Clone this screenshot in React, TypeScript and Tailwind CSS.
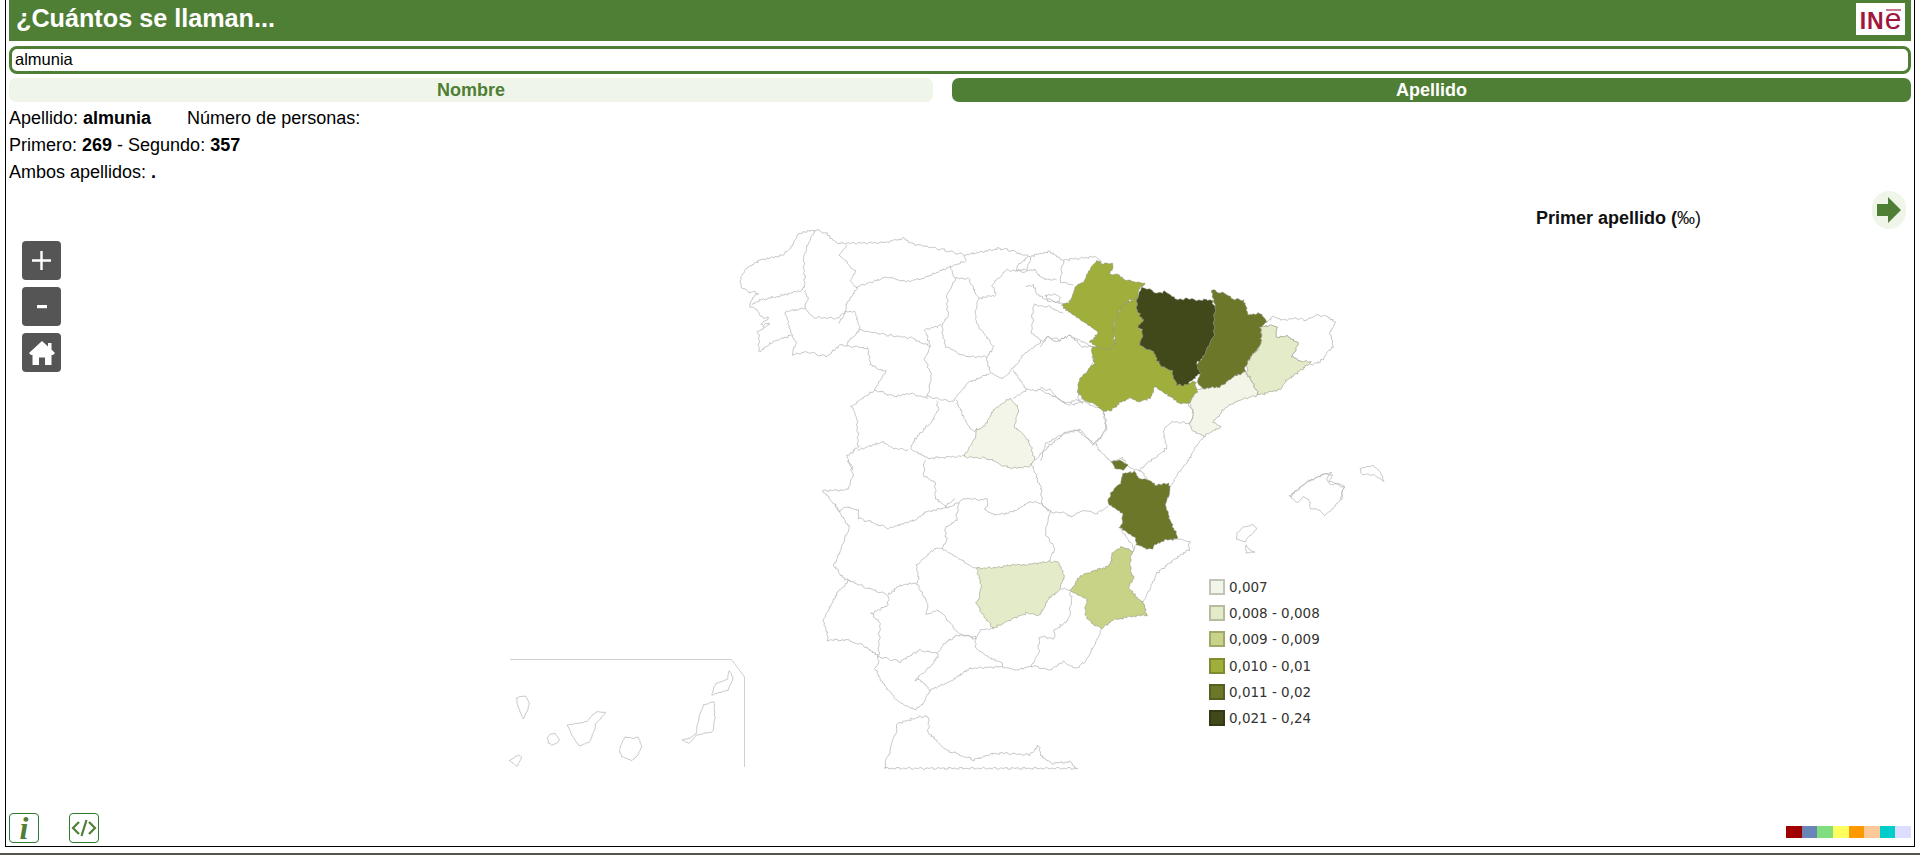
import React from "react";

type P = number[];

// Builds a path from points traced in a zoomed view (origin ox,oy, scale 3); the wobble gives the coast its irregular edge.
function tr(ox: number, oy: number, pts: P, close = false, amp = 0.75): string {
  const xy: [number, number][] = [];
  for (let i = 0; i < pts.length; i += 2) xy.push([ox + pts[i] / 3, oy + pts[i + 1] / 3]);
  if (close) xy.push(xy[0]);
  let d = "";
  for (let i = 0; i < xy.length - 1; i++) {
    const [a, b] = xy[i];
    const [c, e] = xy[i + 1];
    const n = Math.max(1, Math.round(Math.hypot(c - a, e - b) / 1.8));
    for (let k = 0; k < n; k++) {
      const x = a + ((c - a) * k) / n;
      const y = b + ((e - b) * k) / n;
      const dx = Math.sin(x * 1.7 + y * 0.9) * amp + Math.sin(y * 3.1) * amp * 0.6;
      const dy = Math.cos(x * 1.1 - y * 1.6) * amp + Math.sin(x * 2.9) * amp * 0.6;
      d += `${d ? "L" : "M"}${(x + dx).toFixed(1)} ${(y + dy).toFixed(1)}`;
    }
  }
  const [lx, ly] = xy[xy.length - 1];
  d += `L${lx.toFixed(1)} ${ly.toFixed(1)}`;
  return close ? d + "Z" : d;
}

const north: P[] = [
  [60,205,75,178,120,150,190,135,210,115,235,70,285,60,320,70,350,100,490,98,550,85,570,100,650,115,735,135,840,115,885,125,925,140,985,125,1030,150,1125,140,1145,155],
  [60,205,65,235,90,245,115,250,95,265,90,290,110,300,125,320,145,325,120,345,150,340,115,365,118,425,160,395,215,375],
  [285,60,250,140,255,230,245,240,180,258,120,270,95,285],
  [380,105,360,135,405,185,390,210,410,235,380,285,375,305,355,340],
  [255,240,262,265,255,295,280,322,355,325,375,305,405,305,420,360],
  [255,295,195,305,215,375,230,400,215,435,260,425,320,440,360,405,385,408],
  [410,230,460,215,500,200,555,215,610,205,690,170,705,205],
  [705,205,680,260,685,320,665,345,675,410,740,440,800,440,820,410,800,380,775,350,765,320,775,265,745,205,705,205],
  [735,135,735,155,690,170],
  [775,265,830,255,815,225,860,180,915,185,935,140],
  [420,360,500,375,580,385,630,410],
  [385,408,445,415,450,465,498,485,465,540,525,560,570,550,625,565],
  [420,360,385,395,385,408],
  [615,360,665,345],
  [615,360,630,405,615,450,635,495,622,560,700,575,740,520,810,490],
  [800,440,810,490,850,505,875,480,915,430,965,395,935,370,940,285,985,290,1010,300,1030,310],
  [965,395,985,380,1010,395,1050,375,1085,395,1120,415,1115,470,1095,490,1100,515,1075,525,1075,570,1090,575,1050,585,1000,560,965,540,920,540,880,480],
  [920,540,880,565],
  [650,570,655,600,640,630,600,670,570,715,620,745,735,738],
  [708,570,740,640,760,665,790,650],
  [465,540,420,570,395,590,410,620,415,710,380,740,400,780],
  [415,720,490,695,520,715,565,720],
  [1090,575,1150,600,1160,660,1120,705,1075,660,1035,670,990,705,945,750],
  [1030,150,1020,215,1060,225],
  [925,140,895,165,890,180,945,180,965,205,1010,210],
  [915,230,940,225,950,250,975,265,1020,280,1045,285],
  [975,255,1015,255,1020,275,985,275,975,255],
];

const east: P[] = [
  [190,515,200,545,190,580,165,610,185,640,215,665,245,655,268,680,300,695],
  [445,490,460,520,450,550,395,545,370,570,380,625,350,650,320,670,300,690,325,720],
  [490,590,450,650,410,710,390,740],
  [750,770,800,725,860,700,875,705,870,725,910,740,905,780],
  [0,320,20,290,60,300,90,285,125,320,160,320],
  [0,445,30,450,70,490,125,478],
  [0,660,20,610,80,575,120,570,160,610],
];

const south: P[] = [
  [68,92,140,90,160,45,145,0],
  [68,92,105,135,120,155,135,140,175,150,175,175,210,185,265,205,345,180,380,155,430,145,465,115],
  [375,0,370,50,405,65,405,110,440,145,470,130,495,115,545,120,565,115,555,150,590,165,640,155,690,125,725,130,745,155],
  [475,125,470,180,435,205,440,240,425,265,480,300,530,325],
  [425,265,405,265,350,315,355,365,345,370,300,375,265,405],
  [690,0,725,90,725,130,750,155,800,160,815,170,850,150,890,160,925,140],
  [750,155,735,220,765,265,745,305],
  [960,205,1000,260,1000,275],
  [780,385,810,390],
  [105,135,150,205,100,315,135,360,150,360,175,375,265,405,265,435,215,460,240,490,235,590],
  [350,370,385,435,375,465,415,450,435,470,475,520,525,535,545,510,580,505],
  [235,590,300,605,360,570,410,580,440,545,475,525,525,530,530,570,605,610,605,620],
  [150,360,115,395,70,475,85,540,140,540,200,560,235,590,235,615,225,625,245,665,290,720,345,750,370,730,390,690,360,660,345,660,385,625,415,590,410,580],
  [390,690,450,665,510,625,605,620,650,630,695,618,750,630,790,605,830,625,860,600,905,505],
  [695,618,715,580,720,530,760,535,765,510,805,480,815,420,810,390],
  [1135,237,1170,245,1165,270,1120,300,1070,340,1050,380,1030,430,1040,465],
  [1090,240,1135,237],
  [1005,255,1000,275],
  [252,925,295,790,360,770,385,770,385,820,440,870,520,900,580,880,620,880,690,885,715,855,725,890,760,910,810,905,830,925,252,925],
];

const balearics: P[] = [
  [208,138,260,98,310,72,335,68,320,85,330,105,355,100,373,110,360,150,340,175,313,197,300,180,270,175,268,150,250,140,232,158,208,138],
  [420,55,460,47,480,65,493,95,460,75,425,72,420,55],
  [50,250,70,232,100,224,110,238,85,262,75,275,50,268,50,250],
  [78,285,88,298,104,305,78,310,78,285],
];

const canary: P[] = [
  [80,175,92,168,108,170,118,190,112,210,100,238,88,210,80,185,80,175],
  [172,295,180,283,195,280,208,298,200,310,185,315,175,308,172,295],
  [232,255,262,250,290,245,305,228,320,215,347,218,335,232,318,250,310,280,300,305,268,318,248,290,232,255],
  [388,330,395,312,406,290,425,295,445,292,455,320,445,345,425,362,395,350,388,330],
  [577,300,600,295,618,280,625,240,640,195,672,185,675,230,668,275,620,285,597,310,577,300],
  [665,165,672,145,680,130,712,118,718,92,730,115,715,150,680,160,665,165],
  [58,362,85,345,96,352,82,380,58,362],
];

const regions: { c: string; p: string }[] = [
  { c: "#f2f5e8", p: tr(720, 210, [870,565,895,590,885,650,925,690,945,750,930,770,870,775,800,745,730,740,765,680,770,660,790,650,820,600], true) },
  { c: "#f2f5e8", p: tr(1040, 240, [615,395,640,430,655,465,600,480,560,500,520,545,545,560,515,575,490,590,455,570,450,550,460,520,450,490,472,450,490,445,540,440,580,410], true) },
  { c: "#e4ebc8", p: tr(1040, 240, [662,262,695,255,712,262,705,290,745,290,772,305,770,330,755,350,780,365,815,365,770,400,735,425,720,448,655,465,640,430,620,400,622,362,650,332,665,300], true) },
  { c: "#e4ebc8", p: tr(800, 460, [530,325,595,322,630,315,665,315,710,310,745,305,775,305,795,350,775,395,745,415,720,465,680,460,640,475,600,495,580,505,545,460,530,430,545,380], true) },
  { c: "#c8d387", p: tr(800, 460, [935,280,965,260,995,275,990,330,1000,350,985,385,1030,430,1040,465,990,470,940,480,905,505,880,495,855,465,860,420,810,390,845,345,895,328,925,320,935,300], true) },
  { c: "#a0ae3c", p: tr(1040, 240, [65,195,90,185,105,140,130,125,150,90,170,62,190,70,218,72,212,105,235,100,245,115,280,125,315,130,300,145,290,175,270,180,245,200,225,240,220,290,228,310,205,330,175,322,150,305,175,280,150,255,120,240,90,220], true) },
  { c: "#a0ae3c", p: tr(1040, 240, [160,320,175,322,205,330,228,310,220,270,230,225,255,190,290,175,292,215,310,240,295,265,310,270,300,315,340,335,360,375,395,395,410,435,440,430,465,425,472,455,445,490,420,490,395,470,345,440,330,475,300,485,270,475,245,485,215,510,190,515,165,495,130,478,112,455,118,420,140,395,145,385,165,372,155,340], true) },
  { c: "#6c772a", p: tr(1040, 240, [515,150,550,160,585,178,612,180,625,225,660,220,682,245,660,262,665,300,650,330,620,365,615,395,580,410,540,440,490,445,470,425,480,400,468,375,495,345,520,290,522,250,525,200], true) },
  { c: "#6c772a", p: tr(800, 460, [970,40,1005,35,1015,55,1050,60,1070,75,1105,70,1112,90,1095,130,1110,180,1135,235,1095,240,1065,255,1055,270,1010,255,1005,230,960,205,970,165,925,130,930,100,960,70], true) },
  { c: "#6c772a", p: tr(800, 460, [935,5,960,0,985,15,970,30,945,25], true, 0.3) },
  { c: "#41481a", p: tr(1040, 240, [305,140,330,150,345,160,375,155,410,180,440,175,470,180,515,180,525,200,522,250,520,290,495,345,470,370,480,400,440,435,410,435,395,395,360,375,340,335,300,315,310,270,295,260,310,240,292,215,290,175], true) },
];

const girona = tr(1040, 240, [682,245,700,230,720,240,770,235,800,240,830,225,865,230,888,252,870,275,878,320,840,365,815,375,780,365,755,350,770,330,772,305,745,290,705,290,712,262,695,255,660,262]);

const legend = [
  ["#f2f5e8", "0,007"],
  ["#e4ebc8", "0,008 - 0,008"],
  ["#c8d387", "0,009 - 0,009"],
  ["#a0ae3c", "0,010 - 0,01"],
  ["#6c772a", "0,011 - 0,02"],
  ["#41481a", "0,021 - 0,24"],
];

const palette = ["#a00000", "#6a86b6", "#7fdf7f", "#ffff60", "#ff9900", "#ffc898", "#00cccc", "#ddddff"];

function SpainMap() {
  return (
    <svg className="absolute left-0 top-0" width="1908" height="650" viewBox="6 185 1908 650" fill="none">
      <g stroke="#b0b0b0" strokeWidth="0.7" strokeLinejoin="round">
        {north.map((p, i) => <path key={`n${i}`} d={tr(720, 210, p)} />)}
        {east.map((p, i) => <path key={`e${i}`} d={tr(1040, 240, p)} />)}
        {south.map((p, i) => <path key={`s${i}`} d={tr(800, 460, p)} />)}
        {balearics.map((p, i) => <path key={`b${i}`} d={tr(1220, 450, p, false, 0.4)} />)}
        {canary.map((p, i) => <path key={`c${i}`} d={tr(490, 640, p, false, 0.3)} />)}
        <path d={girona} />
      </g>
      <path d="M510 659.5H731.5L744.5 677V767" stroke="#d0d0d0" strokeWidth="1" />
      <g stroke="#8c8c7c" strokeWidth="0.5" strokeLinejoin="round">
        {regions.map((r, i) => <path key={i} d={r.p} fill={r.c} />)}
      </g>
    </svg>
  );
}

export default function App() {
  return (
    <div className="flex h-[855px] flex-col bg-white font-['Liberation_Sans',Arial,sans-serif] text-[18px] text-black">
      <div className="ml-[5px] flex h-[847px] w-[1910px] flex-col border-x border-b border-black">
        <div className="flex flex-col px-[3px]">
          <header className="flex h-[41px] items-start justify-between bg-[#4f7e35] pl-[7px] pr-[6px]">
            <h1 className="mt-[3px] text-[25.2px] font-bold leading-[30px] text-white">¿Cuántos se llaman...</h1>
            <div className="relative mt-[3px] flex h-[32px] w-[49px] items-baseline justify-center bg-white leading-[32px] text-[#a0163c]">
              <span className="text-[23px] font-bold tracking-[1px]">IN</span>
              <span className="text-[30px]">e</span>
              <span className="absolute right-[4px] top-[6px] h-[2px] w-[15px] bg-[#c9788e]" />
            </div>
          </header>
          <div className="mt-[5px] flex h-[28px] items-center rounded-[8px] border-[3px] border-[#4f7e35] pb-[1px] pl-[3px] text-[16.5px] leading-none">almunia</div>
          <nav className="mt-[4px] flex h-[24px] gap-[19px] font-bold leading-[24px]">
            <div className="w-[924px] rounded-[7px] bg-[#eff6e9] text-center text-[#4f7e35]">Nombre</div>
            <div className="flex-1 rounded-[7px] bg-[#4f7e35] text-center text-white">Apellido</div>
          </nav>
          <div className="mt-[2px] flex h-[27px] items-center leading-none">
            <span>Apellido: <b>almunia</b></span>
            <span className="ml-[36px]">Número de personas:</span>
          </div>
          <div className="flex h-[27px] items-center leading-none"><span>Primero: <b>269</b> - Segundo: <b>357</b></span></div>
          <div className="flex h-[27px] items-center leading-none"><span>Ambos apellidos: <b>.</b></span></div>
        </div>

        <main className="relative flex-1">
          <SpainMap />
          <div className="absolute left-[16px] top-[56px] flex flex-col gap-[7px] text-white">
            <div className="flex h-[39px] w-[39px] items-center justify-center rounded-[4px] bg-[#555555]">
              <svg width="21" height="21" viewBox="0 0 21 21"><path d="M10.5 1V20M1 10.5H20" stroke="#fff" strokeWidth="2.4" /></svg>
            </div>
            <div className="flex h-[39px] w-[39px] items-center justify-center rounded-[4px] bg-[#555555]">
              <svg width="10" height="4" viewBox="0 0 10 4"><rect width="10" height="3.2" fill="#fff" /></svg>
            </div>
            <div className="flex h-[39px] w-[39px] items-center justify-center rounded-[4px] bg-[#555555]">
              <svg width="26" height="24" viewBox="0 0 26 24"><path d="M13 0L19 5.5V2H22.5V8.6L26 12L24 14H22.5V24H16V16.5H10V24H3.5V14H2L0 12Z" fill="#fff" /></svg>
            </div>
          </div>
          <div className="absolute left-[1530px] top-[21px] font-bold leading-[24px] text-[#111]">
            Primer apellido (<span className="font-normal">‰)</span>
          </div>
          <div className="absolute right-[8px] top-[6px] flex h-[38px] w-[34px] items-center justify-center rounded-full bg-[#eff6e9]">
            <svg width="24" height="26" viewBox="0 0 24 26"><path d="M0 7H11V0L24 13L11 26V19H0Z" fill="#4f7e35" /></svg>
          </div>
          <div className="absolute left-[1203px] top-[394px] flex flex-col gap-[10.2px] font-['DejaVu_Sans',Verdana,sans-serif] text-[13.5px] leading-[16px] text-[#333]">
            {legend.map(([c, t]) => (
              <div key={t} className="flex items-center gap-[4px]">
                <span className="h-[16px] w-[16px] border-2 border-[#00000033]" style={{ backgroundColor: c }} />
                <span>{t}</span>
              </div>
            ))}
          </div>
          <div className="absolute bottom-[3px] left-[3px] right-[3px] flex items-end">
            <div className="flex h-[30px] w-[30px] items-center justify-center rounded-[4px] border border-[#2f7a2f] bg-white">
              <span className="font-['Liberation_Serif',serif] text-[32px] font-bold italic leading-none text-[#4f7e35]">i</span>
            </div>
            <div className="ml-[30px] flex h-[30px] w-[30px] items-center justify-center rounded-[4px] border border-[#2f7a2f] bg-white">
              <svg width="26" height="20" viewBox="0 0 26 20" fill="none" stroke="#4f7e35" strokeWidth="2.2"><path d="M8 4L2 10L8 16M18 4L24 10L18 16M15.5 2L10.5 18" /></svg>
            </div>
            <div className="mb-[5px] ml-auto flex h-[12px] w-[125px]">
              {palette.map((c) => <span key={c} className="h-full flex-1" style={{ backgroundColor: c }} />)}
            </div>
          </div>
        </main>
      </div>
      <div className="mt-auto h-[2px] bg-[#55554f]" />
    </div>
  );
}
